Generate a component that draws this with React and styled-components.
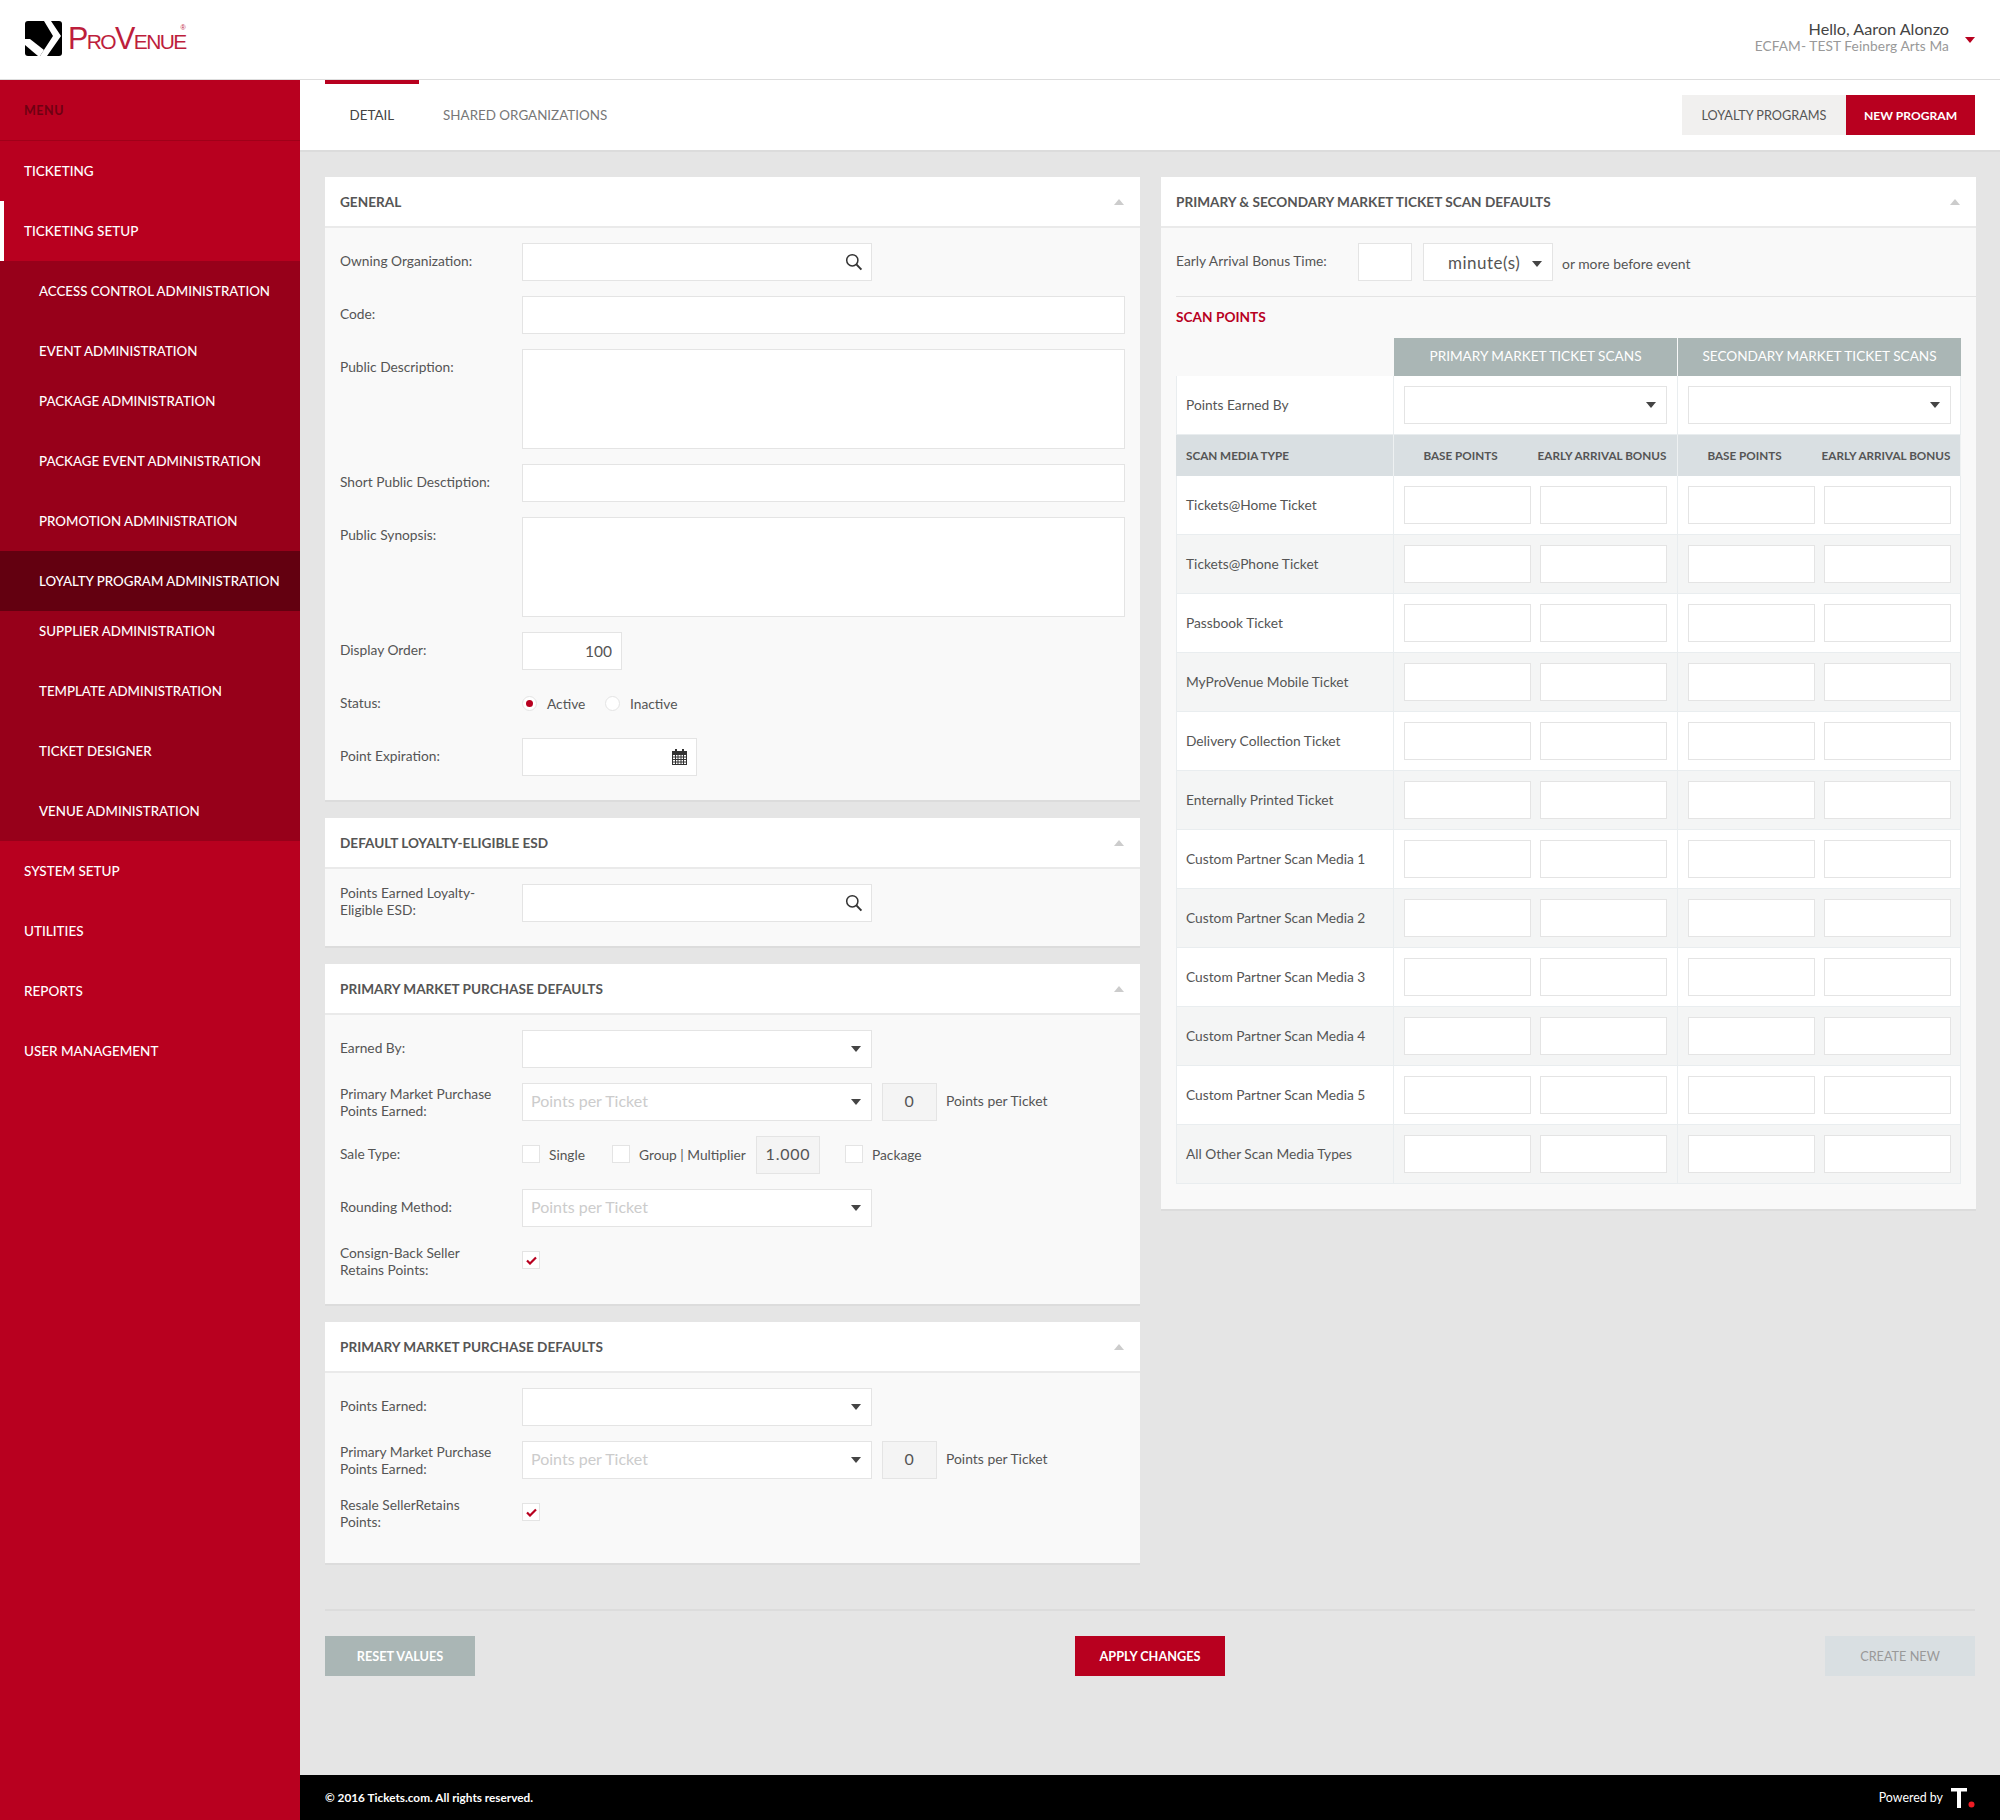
import styled, { createGlobalStyle } from "styled-components";

const GlobalStyle = createGlobalStyle`
  html, body {
    margin: 0;
    padding: 0;
    background: #e5e5e5;
    font-family: Lato, "Open Sans", sans-serif;
    color: #444;
  }
  * { box-sizing: border-box; }
`;

const RED = "#b8001f";
const BORDER = "#e4e4e4";

const Page = styled.div`
  width: 2000px;
  min-height: 1820px;
  display: flex;
  flex-direction: column;
`;

const Header = styled.header`
  height: 80px;
  background: #fff;
  border-bottom: 1px solid #ddd;
  display: flex;
  align-items: center;
  justify-content: space-between;
  padding: 0 25px;
`;

const Brand = styled.div`
  display: flex;
  align-items: center;
  gap: 6px;
  margin-top: -2px;
`;

const BrandName = styled.div`
  position: relative;
  margin-top: -2px;
  color: #bd1e3c;
  font-family: "Liberation Sans", sans-serif;
  font-size: 30.5px;
  line-height: 30px;
  letter-spacing: -1.6px;
  font-variant: small-caps;
  font-weight: 400;
`;

const Registered = styled.sup`
  position: absolute;
  right: 0;
  top: 1px;
  font-size: 7px;
  line-height: 8px;
  letter-spacing: 0;
`;

const UserBox = styled.div`
  display: flex;
  align-items: center;
  gap: 16px;
`;

const UserText = styled.div`
  text-align: right;
  margin-bottom: 5px;
`;

const UserName = styled.div`
  font-size: 16.2px;
  line-height: 18px;
  color: #444;
`;

const UserOrg = styled.div`
  font-size: 13.7px;
  line-height: 16px;
  letter-spacing: 0.1px;
  color: #999;
`;

const Caret = styled.span`
  display: inline-block;
  flex-shrink: 0;
  width: 0;
  height: 0;
  margin-top: ${(p) => p.$drop || 0}px;
  border-left: 5.5px solid transparent;
  border-right: 5.5px solid transparent;
  border-top: 6px solid ${(p) => p.$color || "#444"};
`;

const Collapse = styled.span`
  width: 0;
  height: 0;
  border-left: 5.5px solid transparent;
  border-right: 5.5px solid transparent;
  border-bottom: 6px solid #ccc;
`;

const Body = styled.div`
  flex: 1;
  display: flex;
`;

const Sidebar = styled.nav`
  width: 300px;
  flex-shrink: 0;
  background: ${RED};
`;

const MenuTitle = styled.div`
  height: 61px;
  padding: 22px 24px 0;
  border-bottom: 1px solid #a00019;
  font-size: 12.5px;
  font-weight: 700;
  line-height: 18px;
  letter-spacing: 0.5px;
  color: #6e0012;
`;

const NavItem = styled.a`
  display: block;
  height: 60px;
  line-height: 61px;
  padding-left: ${(p) => (p.$active ? 20 : 24)}px;
  border-left: ${(p) => (p.$active ? "4px solid #fff" : "none")};
  color: #fff;
  font-size: 13.5px;
  font-weight: 500;
  white-space: nowrap;
`;

const SubMenu = styled.div`
  background: #97001a;
`;

const SubItem = styled.a`
  display: block;
  height: 60px;
  line-height: 61px;
  padding-left: 39px;
  margin-top: ${(p) => (p.$pull ? -10 : 0)}px;
  background: ${(p) => (p.$current ? "#630010" : "transparent")};
  color: #fff;
  font-size: 13.3px;
  font-weight: 500;
  white-space: nowrap;
`;

const Main = styled.main`
  flex: 1;
  display: flex;
  flex-direction: column;
  min-width: 0;
`;

const TabBar = styled.div`
  height: 70px;
  background: #fff;
  box-shadow: 0 2px 0 #dcdcdc;
  display: flex;
  align-items: flex-start;
  justify-content: space-between;
  padding: 0 25px;
`;

const Tabs = styled.div`
  display: flex;
`;

const Tab = styled.div`
  height: 70px;
  padding: 0 24.5px;
  line-height: 63px;
  font-size: 13.4px;
  color: ${(p) => (p.$active ? "#444" : "#777")};
  border-top: 4px solid ${(p) => (p.$active ? RED : "transparent")};
`;

const TabActions = styled.div`
  display: flex;
  margin-top: 15px;
`;

const TabButton = styled.button`
  width: ${(p) => (p.$primary ? 129 : 164)}px;
  height: 40px;
  border: none;
  padding: 0;
  background: ${(p) => (p.$primary ? RED : "#f1f0ef")};
  color: ${(p) => (p.$primary ? "#fff" : "#555")};
  font-family: inherit;
  font-size: ${(p) => (p.$primary ? 12.1 : 12.7)}px;
  font-weight: ${(p) => (p.$primary ? 700 : 400)};
`;

const Content = styled.div`
  flex: 1;
  padding: 27px 24px 0 25px;
`;

const Columns = styled.div`
  display: grid;
  grid-template-columns: 815px 815px;
  column-gap: 21px;
  align-items: start;
`;

const Panel = styled.section`
  background: #f9f9f9;
  box-shadow: 0 2px 0 #dcdcdc;
  margin-bottom: 18px;
  padding-bottom: ${(p) => p.$bottom ?? 24}px;
`;

const PanelHead = styled.div`
  height: 51px;
  background: #fff;
  border-bottom: 2px solid #eaeaea;
  padding: 1px 16px 0 15px;
  display: flex;
  align-items: center;
  justify-content: space-between;
`;

const PanelTitle = styled.h3`
  margin: 0;
  font-size: 13.6px;
  font-weight: 700;
  color: #555;
`;

const PanelBody = styled.div`
  padding: 15px 15px 0;
  display: flex;
  flex-direction: column;
  gap: ${(p) => (p.$flat ? 0 : 15)}px;
`;

const Row = styled.div`
  display: flex;
  align-items: flex-start;
  min-height: 38px;
`;

const Label = styled.label`
  width: 182px;
  flex-shrink: 0;
  padding-top: ${(p) => p.$top ?? 9}px;
  font-size: 13.75px;
  line-height: 17px;
  color: #555;
`;

const Control = styled.div`
  width: ${(p) => p.$w || 350}px;
  height: 38px;
  flex-shrink: 0;
  background: #fff;
  border: 1px solid ${BORDER};
  display: flex;
  align-items: center;
  justify-content: space-between;
  padding: 0 ${(p) => p.$right ?? 10}px 0 8px;
  font-size: 16px;
  color: #ccc;
`;

const ControlText = styled.span`
  margin-top: -3px;
`;

const TextInput = styled.input`
  display: block;
  width: ${(p) => p.$w || 603}px;
  height: 38px;
  flex-shrink: 0;
  padding: 0 9px;
  border: 1px solid ${BORDER};
  background: #fff;
  outline: none;
  text-align: ${(p) => (p.$end ? "right" : "left")};
  font-family: inherit;
  font-size: 15.5px;
  color: #555;
`;

const TextArea = styled.textarea`
  display: block;
  width: 603px;
  height: 100px;
  padding: 8px;
  border: 1px solid ${BORDER};
  background: #fff;
  outline: none;
  resize: none;
`;

const ReadBox = styled.div`
  width: ${(p) => p.$w}px;
  height: 38px;
  flex-shrink: 0;
  margin-left: ${(p) => p.$gap}px;
  padding-bottom: 4px;
  background: #f4f4f4;
  border: 1px solid ${BORDER};
  display: flex;
  align-items: center;
  justify-content: center;
  font-size: 16px;
  color: #555;
  letter-spacing: 0.8px;
`;

const Note = styled.span`
  margin-left: 9px;
  padding-top: ${(p) => p.$drop || 0}px;
  font-size: 13.9px;
  line-height: 36px;
  color: #555;
`;

const Option = styled.div`
  width: ${(p) => (p.$w ? `${p.$w}px` : "auto")};
  height: 36px;
  margin-left: ${(p) => p.$gap || 0}px;
  display: flex;
  align-items: center;
  font-size: 13.75px;
  color: #555;
  white-space: nowrap;
`;

const Box = styled.span`
  width: 18px;
  height: 18px;
  flex-shrink: 0;
  margin-right: 9px;
  background: #fff;
  border: 1px solid ${BORDER};
  display: flex;
  align-items: center;
  justify-content: center;
`;

const Radio = styled.span`
  width: 15px;
  height: 15px;
  flex-shrink: 0;
  margin-right: 10px;
  border-radius: 50%;
  background: #fff;
  border: 1px solid ${BORDER};
  display: flex;
  align-items: center;
  justify-content: center;
`;

const RadioDot = styled.span`
  width: 7px;
  height: 7px;
  border-radius: 50%;
  background: ${RED};
`;

const Divider = styled.div`
  height: 1px;
  margin: 15px -15px 0 0;
  background: ${BORDER};
`;

const ScanRow = styled.div`
  display: flex;
  align-items: flex-start;
  height: 38px;
`;

const ScanLabel = styled.label`
  width: 182px;
  padding-top: 9px;
  font-size: 13.8px;
  line-height: 17px;
  color: #555;
`;

const UnitSelect = styled.div`
  width: 130px;
  height: 38px;
  margin-left: 11px;
  padding: 0 10px 0 24px;
  background: #fff;
  border: 1px solid ${BORDER};
  display: flex;
  align-items: center;
  justify-content: space-between;
  font-size: 17px;
  letter-spacing: 0.5px;
  color: #555;
`;

const ScanHeading = styled.h4`
  margin: 11px 0 12px;
  font-size: 13.7px;
  line-height: 18px;
  font-weight: 700;
  color: ${RED};
`;

const GridRow = styled.div`
  display: grid;
  grid-template-columns: 218px 284px 283px;
  height: ${(p) => p.$h || 59}px;
  background: ${(p) => p.$bg || "#fff"};
`;

const GroupHead = styled.div`
  background: #aab6b5;
  color: #fff;
  font-size: 13.6px;
  margin-right: ${(p) => (p.$second ? 0 : 1)}px;
  padding-bottom: 2px;
  display: flex;
  align-items: center;
  justify-content: center;
`;

const Cell = styled.div`
  display: flex;
  align-items: center;
  gap: 9px;
  padding: 0 10px;
  border-right: 1px solid #e9edef;
  border-bottom: 1px solid #e9edef;
`;

const NameCell = styled(Cell)`
  padding: 0 9px 1px;
  border-left: 1px solid #e9edef;
  font-size: 13.75px;
  color: #555;
`;

const SubHeadCell = styled.div`
  display: grid;
  grid-template-columns: 133px 150px;
  align-items: center;
  padding-bottom: 1px;
  border-right: 1px solid #eef1f2;
  font-size: 11.7px;
  font-weight: 700;
  color: #555;
  text-align: center;
  white-space: nowrap;
`;

const SubHeadName = styled(SubHeadCell)`
  display: flex;
  padding: 0 10px 1px;
`;

const ScanInput = styled.input`
  width: 127px;
  height: 38px;
  padding: 0 8px;
  border: 1px solid ${BORDER};
  background: #fff;
  outline: none;
`;

const ActionBar = styled.div`
  margin-top: 28px;
  padding-top: 25px;
  width: 1650px;
  border-top: 2px solid #dcdcdc;
  display: flex;
  justify-content: space-between;
`;

const ActionButton = styled.button`
  width: 150px;
  height: 40px;
  border: none;
  padding: 0;
  background: ${(p) => p.$bg};
  color: ${(p) => p.$color};
  font-family: inherit;
  font-size: 12.7px;
  font-weight: ${(p) => p.$weight || 700};
`;

const Footer = styled.footer`
  height: 45px;
  background: #000;
  color: #fff;
  display: flex;
  align-items: center;
  justify-content: space-between;
  padding: 0 25px;
  font-size: 11.8px;
  font-weight: 700;
`;

const Powered = styled.div`
  display: flex;
  align-items: center;
  gap: 8px;
  font-size: 12.4px;
  font-weight: 400;
`;

const Logo = () => (
  <svg width="37" height="35" viewBox="0 0 37 35">
    <rect width="37" height="35" rx="3" fill="#000" />
    <polygon points="19,0 26,0 36,15 22,35 15,35 28,15" fill="#fff" />
    <polygon points="0,18 5,18 19,29 15,35 13,35 0,24" fill="#fff" />
  </svg>
);

const SearchIcon = () => (
  <svg width="18" height="18" viewBox="0 0 18 18">
    <circle cx="7.3" cy="7.3" r="5.6" fill="none" stroke="#333" strokeWidth="1.5" />
    <line x1="11.4" y1="11.4" x2="16.4" y2="16.6" stroke="#333" strokeWidth="2" />
  </svg>
);

const CalendarIcon = () => (
  <svg width="15" height="16" viewBox="0 0 15 16">
    <rect x="3" y="0" width="2" height="3" fill="#333" />
    <rect x="10" y="0" width="2" height="3" fill="#333" />
    <rect x="0" y="2" width="15" height="3" fill="#333" />
    <rect x="0.5" y="5.5" width="14" height="10" fill="#fff" stroke="#333" />
    <path
      d="M3.5 5.5v10M6 5.5v10M9 5.5v10M11.5 5.5v10M.5 8h14M.5 10.5h14M.5 13h14"
      stroke="#333"
      fill="none"
    />
  </svg>
);

const CheckIcon = () => (
  <svg width="11" height="9" viewBox="0 0 11 9">
    <path d="M1 4.5L4 7.5L10 1.5" fill="none" stroke={RED} strokeWidth="2.2" />
  </svg>
);

const setupItems = [
  { name: "ACCESS CONTROL ADMINISTRATION" },
  { name: "EVENT ADMINISTRATION" },
  { name: "PACKAGE ADMINISTRATION", pull: true },
  { name: "PACKAGE EVENT ADMINISTRATION" },
  { name: "PROMOTION ADMINISTRATION" },
  { name: "LOYALTY PROGRAM ADMINISTRATION", current: true },
  { name: "SUPPLIER ADMINISTRATION", pull: true },
  { name: "TEMPLATE ADMINISTRATION" },
  { name: "TICKET DESIGNER" },
  { name: "VENUE ADMINISTRATION" },
];

const scanTypes = [
  "Tickets@Home Ticket",
  "Tickets@Phone Ticket",
  "Passbook Ticket",
  "MyProVenue Mobile Ticket",
  "Delivery Collection Ticket",
  "Enternally Printed Ticket",
  "Custom Partner Scan Media 1",
  "Custom Partner Scan Media 2",
  "Custom Partner Scan Media 3",
  "Custom Partner Scan Media 4",
  "Custom Partner Scan Media 5",
  "All Other Scan Media Types",
];

const SelectBox = ({ text, w }) => (
  <Control $w={w}>
    <ControlText>{text}</ControlText>
    <Caret />
  </Control>
);

const LookupBox = () => (
  <Control $right={8}>
    <span />
    <SearchIcon />
  </Control>
);

const PointsRow = () => (
  <Row>
    <Label $top={2}>
      Primary Market Purchase
      <br />
      Points Earned:
    </Label>
    <SelectBox text="Points per Ticket" />
    <ReadBox $w={55} $gap={10}>
      0
    </ReadBox>
    <Note>Points per Ticket</Note>
  </Row>
);

const CheckRow = ({ children }) => (
  <Row>
    <Label $top={2}>{children}</Label>
    <Option>
      <Box>
        <CheckIcon />
      </Box>
    </Option>
  </Row>
);

const Section = ({ title, bottom, children }) => (
  <Panel $bottom={bottom}>
    <PanelHead>
      <PanelTitle>{title}</PanelTitle>
      <Collapse />
    </PanelHead>
    <PanelBody>{children}</PanelBody>
  </Panel>
);

const App = () => (
  <Page>
    <GlobalStyle />
    <Header>
      <Brand>
        <Logo />
        <BrandName>
          ProVenue
          <Registered>®</Registered>
        </BrandName>
      </Brand>
      <UserBox>
        <UserText>
          <UserName>Hello, Aaron Alonzo</UserName>
          <UserOrg>ECFAM- TEST Feinberg Arts Ma</UserOrg>
        </UserText>
        <Caret $color={RED} />
      </UserBox>
    </Header>
    <Body>
      <Sidebar>
        <MenuTitle>MENU</MenuTitle>
        <NavItem>TICKETING</NavItem>
        <NavItem $active>TICKETING SETUP</NavItem>
        <SubMenu>
          {setupItems.map((item) => (
            <SubItem key={item.name} $pull={item.pull} $current={item.current}>
              {item.name}
            </SubItem>
          ))}
        </SubMenu>
        <NavItem>SYSTEM SETUP</NavItem>
        <NavItem>UTILITIES</NavItem>
        <NavItem>REPORTS</NavItem>
        <NavItem>USER MANAGEMENT</NavItem>
      </Sidebar>
      <Main>
        <TabBar>
          <Tabs>
            <Tab $active>DETAIL</Tab>
            <Tab>SHARED ORGANIZATIONS</Tab>
          </Tabs>
          <TabActions>
            <TabButton>LOYALTY PROGRAMS</TabButton>
            <TabButton $primary>NEW PROGRAM</TabButton>
          </TabActions>
        </TabBar>
        <Content>
          <Columns>
            <div>
              <Section title="GENERAL">
                <Row>
                  <Label>Owning Organization:</Label>
                  <LookupBox />
                </Row>
                <Row>
                  <Label>Code:</Label>
                  <TextInput />
                </Row>
                <Row>
                  <Label>Public Description:</Label>
                  <TextArea />
                </Row>
                <Row>
                  <Label>Short Public Desctiption:</Label>
                  <TextInput />
                </Row>
                <Row>
                  <Label>Public Synopsis:</Label>
                  <TextArea />
                </Row>
                <Row>
                  <Label>Display Order:</Label>
                  <TextInput $w={100} $end readOnly value="100" />
                </Row>
                <Row>
                  <Label>Status:</Label>
                  <Option $w={83}>
                    <Radio>
                      <RadioDot />
                    </Radio>
                    Active
                  </Option>
                  <Option>
                    <Radio />
                    Inactive
                  </Option>
                </Row>
                <Row>
                  <Label>Point Expiration:</Label>
                  <Control $w={175} $right={9}>
                    <span />
                    <CalendarIcon />
                  </Control>
                </Row>
              </Section>
              <Section title="DEFAULT LOYALTY-ELIGIBLE ESD">
                <Row>
                  <Label $top={0}>
                    Points Earned Loyalty-
                    <br />
                    Eligible ESD:
                  </Label>
                  <LookupBox />
                </Row>
              </Section>
              <Section title="PRIMARY MARKET PURCHASE DEFAULTS">
                <Row>
                  <Label>Earned By:</Label>
                  <SelectBox />
                </Row>
                <PointsRow />
                <Row>
                  <Label>Sale Type:</Label>
                  <Option $w={90}>
                    <Box />
                    Single
                  </Option>
                  <Option $w={133}>
                    <Box />
                    Group | Multiplier
                  </Option>
                  <ReadBox $w={64} $gap={11}>
                    1.000
                  </ReadBox>
                  <Option $gap={25}>
                    <Box />
                    Package
                  </Option>
                </Row>
                <Row>
                  <Label>Rounding Method:</Label>
                  <SelectBox text="Points per Ticket" />
                </Row>
                <CheckRow>
                  Consign-Back Seller
                  <br />
                  Retains Points:
                </CheckRow>
              </Section>
              <Section title="PRIMARY MARKET PURCHASE DEFAULTS" bottom={31}>
                <Row>
                  <Label>Points Earned:</Label>
                  <SelectBox />
                </Row>
                <PointsRow />
                <CheckRow>
                  Resale SellerRetains
                  <br />
                  Points:
                </CheckRow>
              </Section>
            </div>
            <Panel $bottom={25}>
              <PanelHead>
                <PanelTitle>PRIMARY &amp; SECONDARY MARKET TICKET SCAN DEFAULTS</PanelTitle>
                <Collapse />
              </PanelHead>
              <PanelBody $flat>
                <ScanRow>
                  <ScanLabel>Early Arrival Bonus Time:</ScanLabel>
                  <TextInput $w={54} />
                  <UnitSelect>
                    minute(s)
                    <Caret $drop={3} />
                  </UnitSelect>
                  <Note $drop={3}>or more before event</Note>
                </ScanRow>
                <Divider />
                <ScanHeading>SCAN POINTS</ScanHeading>
                <GridRow $h={38} $bg="transparent">
                  <div />
                  <GroupHead>PRIMARY MARKET TICKET SCANS</GroupHead>
                  <GroupHead $second>SECONDARY MARKET TICKET SCANS</GroupHead>
                </GridRow>
                <GridRow>
                  <NameCell>Points Earned By</NameCell>
                  <Cell>
                    <SelectBox w={263} />
                  </Cell>
                  <Cell>
                    <SelectBox w={263} />
                  </Cell>
                </GridRow>
                <GridRow $h={41} $bg="#d9dfe2">
                  <SubHeadName>SCAN MEDIA TYPE</SubHeadName>
                  <SubHeadCell>
                    <span>BASE POINTS</span>
                    <span>EARLY ARRIVAL BONUS</span>
                  </SubHeadCell>
                  <SubHeadCell>
                    <span>BASE POINTS</span>
                    <span>EARLY ARRIVAL BONUS</span>
                  </SubHeadCell>
                </GridRow>
                {scanTypes.map((name, i) => (
                  <GridRow key={name} $bg={i % 2 ? "#f4f5f5" : "#fff"}>
                    <NameCell>{name}</NameCell>
                    <Cell>
                      <ScanInput />
                      <ScanInput />
                    </Cell>
                    <Cell>
                      <ScanInput />
                      <ScanInput />
                    </Cell>
                  </GridRow>
                ))}
              </PanelBody>
            </Panel>
          </Columns>
          <ActionBar>
            <ActionButton $bg="#aab6b5" $color="#fff">
              RESET VALUES
            </ActionButton>
            <ActionButton $bg={RED} $color="#fff">
              APPLY CHANGES
            </ActionButton>
            <ActionButton $bg="#d9dfe2" $color="#999" $weight={400}>
              CREATE NEW
            </ActionButton>
          </ActionBar>
        </Content>
        <Footer>
          <span>© 2016 Tickets.com. All rights reserved.</span>
          <Powered>
            Powered by
            <svg width="24" height="20" viewBox="0 0 24 20">
              <path d="M0 0H16V3.5H10V20H6V3.5H0Z" fill="#fff" />
              <circle cx="20.5" cy="16.5" r="3" fill="#ed1c24" />
            </svg>
          </Powered>
        </Footer>
      </Main>
    </Body>
  </Page>
);

export default App;
